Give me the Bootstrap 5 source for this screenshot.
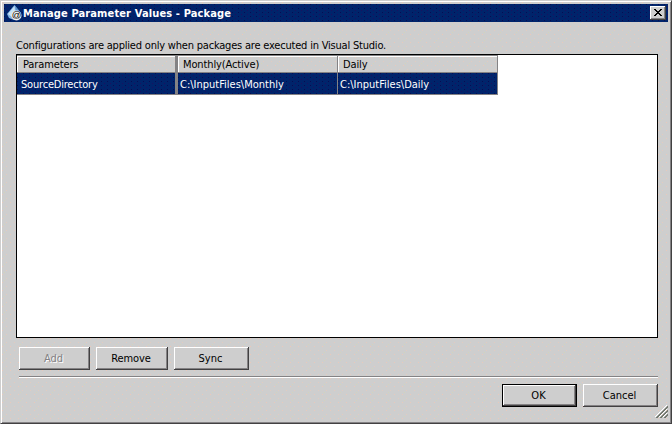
<!DOCTYPE html>
<html lang="en">
<head>
<meta charset="utf-8">
<title>Manage Parameter Values - Package</title>
<meta name="viewport" content="width=device-width, initial-scale=1">
<link href="https://cdn.jsdelivr.net/npm/bootstrap@5.3.0/dist/css/bootstrap.min.css" rel="stylesheet">
<style>
:root{--navy:#00246b;--face:#cecece;
--dither:conic-gradient(at 1px 1px,transparent 75%,#e9c9bb 0) 1px 1px/8px 8px,conic-gradient(at 1px 1px,transparent 75%,#e2cbc0 0) 5px 5px/8px 8px,conic-gradient(at 1px 1px,transparent 75%,#d2d4bd 0) 3px 7px/16px 8px;
--navydots:conic-gradient(at 1px 1px,transparent 75%,#080c52 0) 0 0/6px 4px,conic-gradient(at 1px 1px,transparent 75%,#1c1060 0) 3px 2px/6px 4px}
body{font-family:"DejaVu Sans Condensed","DejaVu Sans",sans-serif;font-stretch:condensed;font-size:11px;line-height:13px;color:#000;overflow:hidden}
.dialog{width:672px;height:424px;background:var(--dither),var(--face);border:1px solid var(--face);border-right-color:#424142;border-bottom-color:#424142;padding:2px;box-shadow:inset 1px 1px #fff,inset -1px -1px #848284}
.titlebar{height:18px;margin:1px 1px 0;background:var(--navydots),var(--navy);color:#fff;font-weight:700;padding:0 2px 0 3px}
.titlebar svg{width:16px;height:16px;flex:none}
.caption{letter-spacing:.13px;white-space:nowrap}
.close-btn{width:16px;height:14px;padding:0;border-radius:0}
.raised{background:var(--face);border:0;border-radius:0;box-shadow:inset -1px -1px #424142,inset 1px 1px #fff,inset -2px -2px #848284;color:#000}
.note{margin:17px 0 0 13px;height:15px;white-space:nowrap;letter-spacing:-.2px}
.values{margin:0 0 0 13px;width:642px;height:284px;border:1px solid #000;background:#fff}
.values-grid{display:grid;grid-template-columns:161px 160px 160px;width:481px;border-top:1px solid #848284}
.head{height:17px;padding:2px 0 0 5px;background:var(--dither),var(--face);border-right:1px solid #848284;border-bottom:1px solid #848284;box-shadow:inset 1px 1px #fff;white-space:nowrap;letter-spacing:-.12px}
.value{height:22px;padding:5px 0 0 2px;background:var(--navydots),var(--navy);color:#fff;border-right:1px solid #848284;border-bottom:1px solid #848284;white-space:nowrap}
.frozen{border-right-width:3px}
.head.frozen{padding-left:6px}
.value.frozen{padding-left:4px;letter-spacing:-.2px}
.push{height:23px;width:75px;padding:0 2px 0 0;font-size:11px;line-height:13px}
.push-add{width:71px}
.push-remove{width:72px;letter-spacing:-.1px}
.push:disabled{background:var(--face);color:#848284;opacity:1;border:0;text-shadow:1px 1px #fff}
.default-btn{border:1px solid #000;padding-right:2px}
.edit-actions{margin:9px 0 0 16px;gap:6px}
.divider{height:2px;margin:6px 0 0 16px;width:639px;background:#848284;border-bottom:1px solid #fff}
.answers{margin:6px 11px 0 0;gap:6px}
.grip{right:3px;bottom:5px;width:13px;height:13px}
</style>
<script src="https://cdn.jsdelivr.net/npm/bootstrap@5.3.0/dist/js/bootstrap.bundle.min.js"></script>
</head>
<body>
<main class="dialog position-relative">
  <header class="titlebar d-flex align-items-center">
    <svg viewBox="0 0 16 16" aria-hidden="true">
      <path d="M7.500 0L14 8L12 14L7 15L2 13L0 9Z" fill="#84b5e6"/>
      <path d="M7.500 1L1 9L5 12L8 7Z" fill="#c8e2f6"/>
      <path d="M8 1L14 8L12 9L9 6Z" fill="#5c91cf"/>
      <circle cx="9.500" cy="10.500" r="5" fill="#efefef"/>
      <text x="4.700" y="13.300" font-size="9.500" font-family="Liberation Sans,sans-serif" font-weight="400" fill="#000">@</text>
    </svg>
    <span class="caption flex-grow-1">Manage Parameter Values - Package</span>
    <button class="btn close-btn raised d-flex align-items-center justify-content-center" aria-label="Close"><svg viewBox="0 0 16 14" shape-rendering="crispEdges" style="height:14px"><path d="M4 3h2v1h1v1h2v-1h1v-1h2v1h-1v1h-1v1h-1v1h1v1h1v1h1v1h-2v-1h-1v-1h-2v1h-1v1h-2v-1h1v-1h1v-1h1v-1h-1v-1h-1v-1h-1z"/></svg></button>
  </header>
  <p class="note mb-0">Configurations are applied only when packages are executed in Visual Studio.</p>
  <section class="values">
    <div class="values-grid">
      <div class="head frozen">Parameters</div><div class="head">Monthly(Active)</div><div class="head">Daily</div>
      <div class="value frozen">SourceDirectory</div><div class="value">C:\InputFiles\Monthly</div><div class="value">C:\InputFiles\Daily</div>
    </div>
  </section>
  <div class="d-flex edit-actions">
    <button class="btn raised push push-add" disabled>Add</button>
    <button class="btn raised push push-remove">Remove</button>
    <button class="btn raised push">Sync</button>
  </div>
  <div class="divider"></div>
  <footer class="answers d-flex justify-content-end">
    <button class="btn raised push default-btn">OK</button>
    <button class="btn raised push">Cancel</button>
  </footer>
  <svg class="grip position-absolute" viewBox="0 0 13 13" aria-hidden="true"><path d="M0 12L12 0M4 12L12 4M8 12L12 8" stroke="#fff"/><path d="M1 13L13 1M2 13L13 2M5 13L13 5M6 13L13 6M9 13L13 9M10 13L13 10" stroke="#73796f"/></svg>
</main>
</body>
</html>
